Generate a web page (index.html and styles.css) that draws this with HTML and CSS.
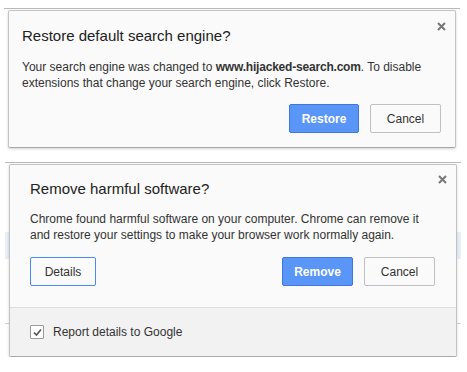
FILE: index.html
```html
<!DOCTYPE html>
<html lang="en">
<head>
    <meta charset="UTF-8">
    <title>Chrome dialogs</title>
    <link rel="stylesheet" href="styles.css">
</head>
<body>
    <div class="frame frame-top">
        <div class="dialog dialog-restore">
            <span class="close">
                <svg width="9" height="9" viewBox="0 0 9 9"><path d="M1 1 L8 8 M8 1 L1 8" stroke="#777" stroke-width="2"/></svg>
            </span>
            <h2>Restore default search engine?</h2>
            <p>Your search engine was changed to <strong>www.hijacked-search.com</strong>. To disable extensions that change your search engine, click Restore.</p>
            <div class="actions">
                <button class="btn btn-primary">Restore</button>
                <button class="btn">Cancel</button>
            </div>
        </div>
    </div>

    <div class="frame frame-bottom">
        <div class="dialog dialog-cleanup">
            <span class="close">
                <svg width="9" height="9" viewBox="0 0 9 9"><path d="M1 1 L8 8 M8 1 L1 8" stroke="#777" stroke-width="2"/></svg>
            </span>
            <div class="main">
                <h2>Remove harmful software?</h2>
                <p>Chrome found harmful software on your computer. Chrome can remove it and restore your settings to make your browser work normally again.</p>
                <div class="actions">
                    <button class="btn btn-focus">Details</button>
                    <span class="spacer"></span>
                    <button class="btn btn-primary">Remove</button>
                    <button class="btn">Cancel</button>
                </div>
            </div>
            <label class="footer">
                <span class="checkbox">
                    <svg width="11" height="11" viewBox="0 0 11 11"><path d="M2 5.5 L4.5 8 L9 2.5" fill="none" stroke="#555" stroke-width="1.6"/></svg>
                </span>
                Report details to Google
            </label>
        </div>
    </div>
</body>
</html>
```

FILE: styles.css
```css
body {
    margin: 0;
    background: #fff;
    font-family: "Liberation Sans", Arial, sans-serif;
    color: #333;
}
.frame {
    width: 448px;
    border-top: 1px solid #b9b9b9;
    padding: 1px 4px 0;
}
.frame-top {
    margin: 8px 0 0 4px;
}
/* page rows showing behind the second dialog */
.frame-bottom {
    margin: 14px 0 0 5px;
    background:
        linear-gradient(to bottom, transparent 69px, #e9eff9 69px, #e9eff9 96px, transparent 96px),
        linear-gradient(to bottom, transparent 160px, #d4d4d4 160px, #d4d4d4 161px, transparent 161px);
}
.dialog {
    position: relative;
    background: #fafafa;
    border: 1px solid #c3c3c3;
    border-bottom-color: #a9a9a9;
    border-radius: 2px;
    box-shadow: 0 1px 3px rgba(0, 0, 0, 0.18);
}
.close {
    position: absolute;
    top: 11px;
    right: 9px;
    line-height: 0;
}
h2 {
    margin: 0;
    font-size: 15px;
    font-weight: normal;
    line-height: 20px;
    color: #222;
}
p {
    margin: 0;
    font-size: 12px;
    line-height: 16px;
}
strong {
    letter-spacing: -0.2px;
}
.actions {
    display: flex;
    justify-content: flex-end;
    gap: 11px;
}
.spacer {
    flex: 1;
}
.btn {
    width: 71px;
    height: 29px;
    padding: 0;
    font-family: inherit;
    font-size: 12px;
    color: #333;
    background: #fafafa;
    border: 1px solid #c0c0c0;
    border-radius: 2px;
}
.btn-primary {
    color: #fff;
    font-weight: bold;
    background: #5a96f7;
    border-color: #3f78d8;
}
.btn-focus {
    width: 66px;
    border-color: #4a8af4;
}
.dialog-restore {
    padding: 15px 14px 14px 13px;
}
.dialog-restore p {
    margin: 13px 0;
}
.dialog-restore .btn-primary {
    width: 70px;
}
.dialog-cleanup .main {
    padding: 14px 21px 21px 20px;
}
.dialog-cleanup p {
    margin: 12px 0 14px;
}
.dialog-cleanup .close {
    top: 10px;
}
.footer {
    display: flex;
    align-items: center;
    gap: 9px;
    height: 48px;
    padding: 0 20px;
    font-size: 12px;
    background: #f2f2f2;
    border-top: 1px solid #dedede;
}
.checkbox {
    display: flex;
    align-items: center;
    justify-content: center;
    width: 12px;
    height: 12px;
    background: #fff;
    border: 1px solid #9a9a9a;
    border-radius: 1px;
}
```
